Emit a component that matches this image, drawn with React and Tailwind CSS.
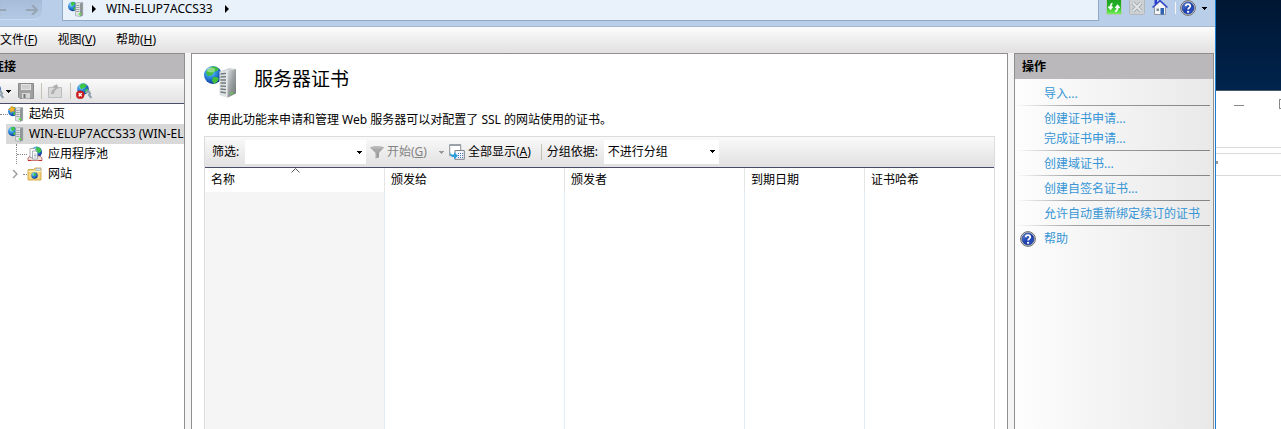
import React from 'react';
import clsx from 'clsx';

const Caret = ({ className }) => (
    <svg viewBox="0 0 5 3" className={clsx('w-[5px] h-[3px] shrink-0', className)} fill="currentColor" shapeRendering="crispEdges">
        <path d="M0 0h5v1H0zM1 1h3v1H1zM2 2h1v1H2z" />
    </svg>
);

const RightCaret = () => (
    <svg viewBox="0 0 4 8" className="w-1 h-2 shrink-0" fill="#000">
        <path d="M0 0l4 4-4 4z" />
    </svg>
);

const Defs = () => (
    <svg className="absolute w-0 h-0" aria-hidden="true">
        <defs>
            <radialGradient id="globe" cx="0.35" cy="0.3" r="0.75">
                <stop offset="0" stopColor="#b8ecff" />
                <stop offset="0.4" stopColor="#2f93e0" />
                <stop offset="1" stopColor="#0b2f9c" />
            </radialGradient>
            <linearGradient id="tower" x1="0" x2="1">
                <stop offset="0" stopColor="#eef0f1" />
                <stop offset="1" stopColor="#8b9396" />
            </linearGradient>
            <linearGradient id="towerSide" x1="0" x2="1" y1="0" y2="1">
                <stop offset="0" stopColor="#dfe2e3" />
                <stop offset="0.5" stopColor="#9a9fa1" />
                <stop offset="1" stopColor="#6e7476" />
            </linearGradient>
            <linearGradient id="green" x1="0" y1="0" x2="0" y2="1">
                <stop offset="0" stopColor="#1f9a22" />
                <stop offset="0.5" stopColor="#22b325" />
                <stop offset="1" stopColor="#7df25e" />
            </linearGradient>
            <linearGradient id="helpBlue" x1="0" y1="0" x2="1" y2="1">
                <stop offset="0" stopColor="#6d93e0" />
                <stop offset="0.5" stopColor="#1b3fae" />
                <stop offset="1" stopColor="#3558c4" />
            </linearGradient>
        </defs>
    </svg>
);

const ServerIcon = ({ star }) => (
    <svg viewBox="0 0 16 16" className="w-4 h-4 shrink-0">
        <circle cx="4.800" cy="5.500" r="4.700" fill="url(#globe)" />
        <path d="M3.500 1.200c1.500-.4 3 0 3.800 1L5.800 4.200 4 5 2.800 3.400zM5.500 6l2.200.8-.6 2-1.700.4z" fill="#3fc546" />
        <path d="M7.500 2.500l2-.9h5.200v12.800l-3 1.200-4.200-1z" fill="#dfe3e4" />
        <path d="M12 2.500l2.700-.9v12.800L12 15.600z" fill="#8d9597" />
        <path d="M7.500 2.500l2-.9h5.200v12.800l-3 1.200-4.200-1z" fill="none" stroke="#858d90" strokeWidth="0.5" />
        <path d="M8.200 4.500h3.300M8.200 6.500h3.300M8.200 8.500h3.300M8.200 10.500h3.300" stroke="#8b9396" strokeWidth="0.8" />
        <path d="M10.800 12.200H13v2h-2.200z" fill="#5ae838" />
        {star && <path d="M3.500 0l1.300 1.800L7 1.500 6 3.500l.8 2-2.300-.4L2.700 6.500 2.400 4.300.3 3.400l2.200-1z" fill="#ffb822" stroke="#d88a10" strokeWidth="0.5" />}
    </svg>
);

const BigServerIcon = () => (
    <svg viewBox="0 0 34 34" className="w-[34px] h-[34px] shrink-0">
        <circle cx="9" cy="10" r="9" fill="url(#globe)" />
        <path d="M7 2c3-1 6 0 8 2l-2 2-3 1-2 3-4 1-2-3 1-3zM9 12l4 0 2 2-2 3-3 2-2-3z" fill="#42be3d" />
        <ellipse cx="7" cy="5" rx="4" ry="2.500" fill="#fff" opacity="0.4" />
        <path d="M15.500 6.500L23 5v27.500l-7.500-2.300z" fill="#dde0e1" />
        <path d="M23 5.500L32 4v24.500L23 33z" fill="url(#towerSide)" />
        <path d="M15.500 6.500L23 5.500 32 4l-6.500-1z" fill="#cfd3d4" />
        <path d="M16.500 9l5.500-.6M16.500 12l5.500-.3M16.500 15H22M16.500 18H22M16.500 21l5.500.3M16.500 24l5.500.6M16.500 27l5.500.9" stroke="#70797c" strokeWidth="1.300" />
        <path d="M23 5.500V33" stroke="#f5f7f7" strokeWidth="0.9" />
        <path d="M26.500 29l2.500-1.200" stroke="#4de02d" strokeWidth="1.300" />
    </svg>
);

const HelpIcon = () => (
    <svg viewBox="0 0 16 16" className="w-4 h-4 shrink-0">
        <circle cx="8" cy="8" r="7.400" fill="#d6d6d6" stroke="#6e6e6e" strokeWidth="1" />
        <circle cx="8" cy="8" r="6" fill="url(#helpBlue)" stroke="#122f86" strokeWidth="0.6" />
        <path d="M5.700 6.300C5.800 3.500 10.400 3.500 10.300 6.300 10.200 7.800 8.100 7.800 8.100 9.600" fill="none" stroke="#fff" strokeWidth="1.800" />
        <circle cx="8.100" cy="11.800" r="1.100" fill="#fff" />
    </svg>
);

const RefreshIcon = () => (
    <svg viewBox="0 0 16 16" className="w-4 h-4">
        <rect x="0.500" y="-2" width="15" height="16.500" rx="1" fill="url(#green)" stroke="#b5c8bc" />
        <path d="M6.500 3.500C4.800 3.800 4.500 5 4.500 8M2.500 6.500l2 2.500 2-2.500M9 11.500c2-.3 2.500-1.500 2.500-4.500M9.500 8l2-2.500 2 2.500" fill="none" stroke="#fff" strokeWidth="1.700" />
    </svg>
);

const StopIcon = () => (
    <svg viewBox="0 0 16 16" className="w-4 h-4">
        <rect x="0.500" y="-2" width="15" height="16.500" rx="1" fill="#ccd0d3" stroke="#b3b8bd" />
        <path d="M4 3l8 8M12 3l-8 8" stroke="#a1a5a8" strokeWidth="3.600" />
        <path d="M4 3l8 8M12 3l-8 8" stroke="#e2e4e6" strokeWidth="2" />
    </svg>
);

const HomeIcon = () => (
    <svg viewBox="0 0 16 16" className="w-4 h-4">
        <path d="M2.500 6.500L8 1.500l5.500 5v8h-11z" fill="#f4f6f8" stroke="#80868c" strokeWidth="0.8" />
        <path d="M2.500 0h2.500v4H2.500z" fill="#2c3fd0" />
        <path d="M0.500 7.500L8 0.500l7.500 7" fill="none" stroke="#2f46d2" strokeWidth="1.500" />
        <path d="M8.500 8h3.500v6.500H8.500z" fill="#2c62b0" />
        <path d="M4.500 8.500h2.500V11H4.500z" fill="#7f8a94" />
    </svg>
);

const SaveIcon = () => (
    <svg viewBox="0 0 16 16" className="w-4 h-4 shrink-0">
        <path d="M.5 .5h15v15H2L.5 14z" fill="#a0a0a0" stroke="#8a8a8a" />
        <path d="M3 1h10v6H3z" fill="#e2e2e2" />
        <path d="M4 3h8M4 5h8" stroke="#bcbcbc" />
        <path d="M4 10h8v5.500H4z" fill="#d5d5d5" />
        <path d="M5.500 11h2v4h-2z" fill="#777" />
    </svg>
);

const UpIcon = () => (
    <svg viewBox="0 0 16 16" className="w-4 h-4 shrink-0">
        <path d="M1.500 4.500H6l1-1.500h3l1 1.500h3.500v10h-13z" fill="#d9d9d9" stroke="#bcbcbc" />
        <path d="M4 11c0-3 1.500-4.500 4-5.500L5.500 4 10 1l1.500 5-1.500-.5C8 7.500 7 9 7 11z" fill="#b0b0b0" />
    </svg>
);

const PlugGlobe = ({ off }) => (
    <svg viewBox="0 0 16 16" className="w-4 h-4 shrink-0">
        <circle cx="7" cy="6" r="5.800" fill="url(#globe)" />
        <path d="M5 1l4-.5 1.500 2.500-2 2L5 6 3.500 3.500zM9 6.500l3-1-.5 4-2 1z" fill="#3fc546" />
        <path d="M9.500 10l3-2 1.500 2.500-1 1.500 2.500 3" fill="none" stroke="#8fa3af" strokeWidth="2.200" />
        {off && (
            <>
                <circle cx="4.200" cy="11.800" r="4" fill="#d22222" stroke="#a61111" strokeWidth="0.5" />
                <path d="M2.700 10.300l3 3M5.700 10.300l-3 3" stroke="#fff" strokeWidth="1.300" />
            </>
        )}
    </svg>
);

const PoolsIcon = () => (
    <svg viewBox="0 0 16 16" className="w-4 h-4 shrink-0">
        <circle cx="9.500" cy="6" r="5.500" fill="url(#globe)" />
        <path d="M9 1l4 1 1.500 3-2 2-3-2z" fill="#3fc546" />
        <path d="M1 12l2-2h10l2 2v2.500H1z" fill="#f0dedb" stroke="#b8463c" strokeWidth="0.7" />
        <path d="M3 2.500h4.500L9 4v7.500H3z" fill="#fff" stroke="#868f98" strokeWidth="0.7" />
        <path d="M5.500 5H9l1.500 1.500V13h-5z" fill="#fff" stroke="#868f98" strokeWidth="0.7" />
        <path d="M7 8h2.500M7 9.500h2.500M7 11h2.500" stroke="#7d8fa8" strokeWidth="0.6" />
        <path d="M1 14.500h3M12 14.500h3" stroke="#c22c22" />
    </svg>
);

const SitesIcon = () => (
    <svg viewBox="0 0 16 16" className="w-4 h-4 shrink-0">
        <path d="M1 3.500h6l1-1.500h6v12H1z" fill="#f6d77a" stroke="#c99d38" strokeWidth="0.8" />
        <path d="M9 2.500h4.500v2H9z" fill="#dbe9f5" stroke="#8ba9c4" strokeWidth="0.5" />
        <path d="M1.500 5.500h12.500" stroke="#fff0b8" />
        <circle cx="7.500" cy="9.500" r="3.200" fill="url(#globe)" />
        <path d="M6.500 7.500l2-.3.8 1.500-1.500 1.300-1.500-.7z" fill="#3fc546" />
    </svg>
);

const FunnelIcon = () => (
    <svg viewBox="0 0 14 14" className="w-3.5 h-3.5 shrink-0">
        <path d="M0 2.500C2 .7 12 .7 14 2.500L9 8v4.500L5.500 13.500V8z" fill="#a9a9a9" />
        <path d="M2 2.800h10" stroke="#c4c4c4" />
        <path d="M8 7.500v5" stroke="#8c8c8c" />
    </svg>
);

const ShowAllIcon = () => (
    <svg viewBox="0 0 16 16" className="w-4 h-4 shrink-0">
        <path d="M.7 .7h11v11h-11z" fill="#fff" stroke="#8a9096" />
        <path d="M.5 .5h11.500v1.500H.5z" fill="#98a0a8" />
        <path d="M6 6.500h9.300v8.800H6z" fill="#f4f7fb" stroke="#7b838b" />
        <path d="M9 9.500h5M9 11.500h5M9 13.500h5" stroke="#4f6db0" strokeDasharray="1 1" />
        <path d="M1 7c0 3 1 3.500 4 3.500V8l4 3.800-4 3.700V13C2 13 .5 11 1 7z" fill="#2e9fdc" />
    </svg>
);

const Separator = () => <span className="w-px h-4 bg-[#c5c2b3] shrink-0" />;

const Dots = ({ className }) => <span className={clsx('border-t border-dotted border-[#888] shrink-0', className)} />;

const menus = [
    { label: '文件', accel: 'F' },
    { label: '视图', accel: 'V' },
    { label: '帮助', accel: 'H' },
];

const columns = [
    { label: '名称', width: 'w-[180px]', sorted: true },
    { label: '颁发给', width: 'w-[180px]' },
    { label: '颁发者', width: 'w-[180px]' },
    { label: '到期日期', width: 'w-[120px]' },
    { label: '证书哈希', width: '' },
];

const actionGroups = [
    ['导入...'],
    ['创建证书申请...', '完成证书申请...'],
    ['创建域证书...'],
    ['创建自签名证书...'],
    ['允许自动重新绑定续订的证书'],
];

const AddressBar = () => (
    <header className="flex items-start h-[27px] bg-[#b9cfe9] border-b border-[#a3b8cf] shrink-0">
        <div className="w-[62px] h-[22px] pr-5 flex shrink-0">
            <div className="flex w-full justify-between items-center h-5 rounded-br-lg border-b border-[#c9dbf0] bg-linear-to-b from-[#a6bcd8] to-[#b3c9e4] text-[#98a5b4]">
                <button aria-label="后退" className="w-1.5 overflow-hidden flex justify-end">
                    <svg viewBox="0 0 12 10" className="w-3 h-2.5 shrink-0" fill="none" stroke="currentColor" strokeWidth="2">
                        <path d="M12 5H1M6 0L1 5l5 5" />
                    </svg>
                </button>
                <button aria-label="前进" className="pr-1">
                    <svg viewBox="0 0 12 10" className="w-3 h-2.5" fill="none" stroke="currentColor" strokeWidth="2">
                        <path d="M0 5h11M6 0l5 5-5 5" />
                    </svg>
                </button>
            </div>
        </div>
        <nav className="flex-1 flex items-center gap-2 h-[21px] pl-[5px] pb-0.5 bg-[#e9f1fa] border border-t-0 border-[#91a9c5]">
            <ServerIcon />
            <RightCaret />
            <a href="#server" className="pl-0.5 pr-1">WIN-ELUP7ACCS33</a>
            <RightCaret />
        </nav>
        <div className="flex items-center pl-[7px] pr-2 h-4">
            <button aria-label="刷新"><RefreshIcon /></button>
            <button aria-label="停止" className="ml-[7px]"><StopIcon /></button>
            <button aria-label="主页" className="ml-[7px]"><HomeIcon /></button>
            <span className="w-px h-3 bg-[#f4f4f4] ml-[7px] mr-1" />
            <button aria-label="帮助" className="flex items-center gap-1.5">
                <HelpIcon />
                <Caret />
            </button>
        </div>
    </header>
);

const MenuBar = () => (
    <nav className="flex items-center gap-5 h-[26px] shrink-0 bg-linear-to-b from-[#fcfcfc] to-[#e2e0e1]">
        {menus.map((m) => (
            <button key={m.accel}>
                {m.label}(<u>{m.accel}</u>)
            </button>
        ))}
    </nav>
);

const Connections = () => (
    <aside className="w-[185px] shrink-0 flex flex-col overflow-hidden bg-white border-t border-r border-[#8f8f8f]">
        <h2 className="-ml-2 h-[25px] leading-[25px] font-bold bg-[#bab8ba] shrink-0">连接</h2>
        <div className="flex items-center h-[25px] shrink-0 -ml-3 border-b border-[#4a4a6a] bg-linear-to-b from-[#fafafa] to-[#e4e2e3]">
            <button aria-label="连接到" className="flex items-center gap-0.5 mr-[7px]">
                <PlugGlobe />
                <Caret />
            </button>
            <button aria-label="保存" className="mr-[7px]"><SaveIcon /></button>
            <Separator />
            <button aria-label="上一级" className="ml-[5px] mr-[7px]"><UpIcon /></button>
            <Separator />
            <button aria-label="断开连接" className="ml-[5px]"><PlugGlobe off /></button>
        </div>
        <ul className="whitespace-nowrap">
            <li className="flex items-center h-5">
                <Dots className="w-2" />
                <ServerIcon star />
                <span className="pl-[5px]">起始页</span>
            </li>
            <li>
                <div className="flex items-center h-5 ml-1.5 pl-0.5 bg-[#d9d9d9]">
                    <ServerIcon />
                    <span className="pl-[5px]">WIN-ELUP7ACCS33 (WIN-ELUP7ACCS33\Administrator)</span>
                </div>
                <ul>
                    <li className="flex items-center h-5 ml-4 border-l border-dotted border-[#888]">
                        <Dots className="w-2.5" />
                        <PoolsIcon />
                        <span className="pl-[5px]">应用程序池</span>
                    </li>
                    <li className="flex items-center h-5 pl-3">
                        <svg viewBox="0 0 6 10" className="w-1.5 h-2.5" fill="none" stroke="#a0a0a0" strokeWidth="1.500">
                            <path d="M1 1l4 4-4 4" />
                        </svg>
                        <Dots className="w-1 ml-[5px]" />
                        <SitesIcon />
                        <span className="pl-[5px]">网站</span>
                    </li>
                </ul>
            </li>
        </ul>
    </aside>
);

const FilterBar = () => (
    <div className="flex items-center h-[31px] pl-[7px] shrink-0 whitespace-nowrap border-b border-[#4a4a6a] bg-linear-to-b from-[#fafafa] to-[#e2e0e1]">
        <label htmlFor="filter" className="w-[33px]">筛选:</label>
        <div className="flex items-center w-[121px] h-6 bg-white pr-1">
            <input id="filter" className="flex-1 min-w-0 h-full px-1 outline-none" />
            <button aria-label="筛选历史记录"><Caret /></button>
        </div>
        <button disabled className="flex items-center gap-[3px] ml-1 text-[#838383]">
            <FunnelIcon />
            <span>开始(<u>G</u>)</span>
        </button>
        <button disabled aria-label="开始选项" className="ml-3 mr-[5px] text-[#9a9a9a]"><Caret /></button>
        <button className="flex items-center gap-[3px] mr-2.5">
            <ShowAllIcon />
            <span>全部显示(<u>A</u>)</span>
        </button>
        <Separator />
        <label htmlFor="group" className="pl-[5px] w-[62px]">分组依据:</label>
        <div className="relative">
            <select id="group" className="appearance-none block w-[115px] h-6 bg-white pl-1 outline-none">
                <option>不进行分组</option>
            </select>
            <Caret className="absolute right-1 top-2.5 pointer-events-none" />
        </div>
    </div>
);

const CertTable = () => (
    <table className="w-full h-full table-fixed border-separate border-spacing-0">
        <thead>
            <tr className="h-6">
                {columns.map((c) => (
                    <th key={c.label} className={clsx('relative h-6 p-0 pl-1.5 text-left font-normal border-r border-[#e5e5e5] last:border-r-0', c.width)}>
                        {c.label}
                        {c.sorted && (
                            <svg viewBox="0 0 9 5" className="absolute left-[86px] top-0 w-[9px] h-[5px]" fill="none" stroke="#555">
                                <path d="M.5 4.500l4-4 4 4" />
                            </svg>
                        )}
                    </th>
                ))}
            </tr>
        </thead>
        <tbody>
            <tr>
                {columns.map((c) => (
                    <td key={c.label} className={clsx('border-r border-[#e3edf8] last:border-r-0', c.sorted && 'bg-[#f5f5f5]')} />
                ))}
            </tr>
        </tbody>
    </table>
);

const Certificates = () => (
    <main className="flex-1 min-w-0 flex flex-col bg-white border border-b-0 border-[#8f8f8f] pl-3 pr-3">
        <div className="flex items-start gap-4 pt-[11px] h-14 shrink-0">
            <BigServerIcon />
            <h1 className="text-[19px] leading-[29px]">服务器证书</h1>
        </div>
        <p className="pl-[3px] h-[26px] leading-5 shrink-0">使用此功能来申请和管理 Web 服务器可以对配置了 SSL 的网站使用的证书。</p>
        <section className="flex-1 min-h-0 flex flex-col border border-b-0 border-[#dcdcdc]">
            <FilterBar />
            <div className="flex-1 min-h-0">
                <CertTable />
            </div>
        </section>
    </main>
);

const Actions = () => (
    <aside className="w-[200px] shrink-0 flex flex-col border border-b-0 border-[#8f8f8f] bg-linear-to-r from-[#fdfdfd] to-[#e9e9e9]">
        <h2 className="h-[25px] leading-[25px] pl-[7px] font-bold bg-[#bab8ba]">操作</h2>
        <div className="pt-0.5 pl-px pr-[3px] text-[#3595d6]">
            {actionGroups.map((group) => (
                <div key={group[0]}>
                    <ul className="pt-[3px] pb-px pl-7">
                        {group.map((label) => (
                            <li key={label} className="h-5 leading-5 whitespace-nowrap">
                                <a href="#action">{label}</a>
                            </li>
                        ))}
                    </ul>
                    <div className="h-px bg-linear-to-r from-transparent via-[#a0a0a0] via-30% to-[#858585]" />
                </div>
            ))}
            <a href="#help" className="flex items-center gap-2 pl-1 pt-[3px] h-[23px]">
                <HelpIcon />
                帮助
            </a>
        </div>
    </aside>
);

// Strip of the desktop and of the window behind the manager
const Backdrop = () => (
    <div className="w-[65px] shrink-0 flex flex-col bg-white">
        <div className="h-[91px] shrink-0 bg-linear-to-b from-[#001633] to-[#00244d] border-b border-[#4a5868]" />
        <div className="h-[57px] shrink-0 flex items-start justify-between pl-[18px] pt-2 border-b border-[#d9d9d9] overflow-hidden">
            <span className="w-2.5 h-px mt-1.5 bg-[#888]" />
            <span className="w-0.5 h-2.5 border border-r-0 border-[#888]" />
        </div>
        <div className="h-1.5 shrink-0 border-b border-[#d9d9d9]" />
        <div className="h-[22px] shrink-0 flex items-start pt-[7px] border-b border-[#d9d9d9]">
            <span className="w-0.5 h-[3px] bg-[#999]" />
        </div>
    </div>
);

export default function App() {
    return (
        <div className="flex h-screen overflow-hidden text-xs text-black font-['Noto_Sans','Noto_Sans_CJK_SC',sans-serif]">
            <Defs />
            <div className="flex-1 min-w-0 flex flex-col bg-[#f5f5f5] border-r border-[#1b7fd1]">
                <AddressBar />
                <MenuBar />
                <div className="flex-1 min-h-0 flex gap-1.5 pr-px">
                    <Connections />
                    <Certificates />
                    <Actions />
                </div>
            </div>
            <Backdrop />
        </div>
    );
}
